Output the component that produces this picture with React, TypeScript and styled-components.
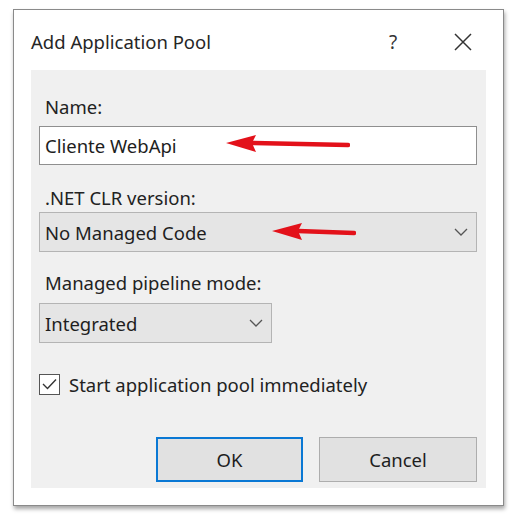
import React from "react";
import styled, {createGlobalStyle} from "styled-components";

const GlobalStyle = createGlobalStyle`
    html, body {
        margin: 0;
        padding: 0;
        background: #ffffff;
    }
    body {
        font-family: "Noto Sans", "Open Sans", sans-serif;
        color: #222;
    }
`;

const Page = styled.div`
    padding: 9px 0 0 13px;
    width: 517px;
    height: 523px;
    box-sizing: border-box;
`;

const Dialog = styled.div`
    width: 491px;
    height: 497px;
    box-sizing: border-box;
    border: 1px solid #8a8a8a;
    background: #ffffff;
    box-shadow: 1px 3px 4px rgba(0, 0, 0, 0.35);
    display: flex;
    flex-direction: column;
`;

const TitleBar = styled.div`
    height: 60px;
    box-sizing: border-box;
    padding: 20px 0 0 17px;
    display: flex;
    align-items: flex-start;
`;

const Title = styled.div`
    flex: 1;
    font-size: 18.5px;
    line-height: 24px;
    color: #262626;
`;

const HelpGlyph = styled.div`
    width: 20px;
    font-size: 19px;
    line-height: 24px;
    color: #333;
    text-align: center;
    margin-right: 51px;
`;

const CloseButton = styled.div`
    width: 18px;
    height: 18px;
    margin: 3px 31px 0 0;
    display: flex;
`;

const Panel = styled.div`
    margin: 0 17px;
    height: 418px;
    box-sizing: border-box;
    background: #f0f0f0;
    padding: 25px 9px 6px 8px;
    display: flex;
    flex-direction: column;
    position: relative;
`;

const FieldGroup = styled.div<{ $mt?: number }>`
    display: flex;
    flex-direction: column;
    margin-top: ${p => p.$mt ?? 0}px;
`;

const Label = styled.div<{ $mb: number }>`
    font-size: 18.5px;
    line-height: 24px;
    padding-left: 6px;
    margin-bottom: ${p => p.$mb}px;
    color: #222;
`;

const TextBox = styled.div`
    height: 39px;
    box-sizing: border-box;
    border: 1px solid #8f8f8f;
    background: #ffffff;
    padding-left: 5px;
    font-size: 18.5px;
    line-height: 37px;
    color: #1e1e1e;
`;

const Select = styled.div<{ $width?: number }>`
    height: 40px;
    width: ${p => (p.$width ? `${p.$width}px` : "auto")};
    box-sizing: border-box;
    border: 1px solid #b4b4b4;
    background: #e5e5e5;
    padding: 0 8px 0 5px;
    display: flex;
    align-items: center;
    justify-content: space-between;
    font-size: 18.5px;
    color: #1e1e1e;
`;

const CheckRow = styled.label`
    margin-top: 30px;
    height: 22px;
    display: flex;
    align-items: center;
    gap: 9px;
    font-size: 18.5px;
    color: #222;
`;

const CheckBox = styled.div`
    width: 21px;
    height: 21px;
    box-sizing: border-box;
    border: 1px solid #555;
    background: #fff;
    display: flex;
    align-items: center;
    justify-content: center;
`;

const ButtonRow = styled.div`
    margin-top: 42px;
    display: flex;
    justify-content: flex-end;
    gap: 16px;
`;

const Button = styled.button<{ $primary?: boolean; $width: number }>`
    width: ${p => p.$width}px;
    height: 45px;
    box-sizing: border-box;
    border: ${p => (p.$primary ? "2px solid #0a78d4" : "1px solid #adadad")};
    background: #e1e1e1;
    font-family: inherit;
    font-size: 18.5px;
    color: #1e1e1e;
    padding: 0;
    cursor: pointer;
`;

const Annotation = styled.svg`
    position: absolute;
    pointer-events: none;
`;

const Chevron = () => (
    <svg width="14" height="8" viewBox="0 0 14 8">
        <path d="M1 1 L7 7 L13 1" fill="none" stroke="#555" strokeWidth="1.3"/>
    </svg>
);

const RedArrow: React.FC<{ left: number; top: number; width: number }> = ({left, top, width}) => (
    <Annotation style={{left, top}} width={width} height="20" viewBox={`0 0 ${width} 20`}>
        <path d={`M26 9 L${width - 2} 11`} stroke="#e3111a" strokeWidth="4.5" strokeLinecap="round"/>
        <path d="M0 9 L30 1 L26 9 L30 18 Z" fill="#e3111a"/>
    </Annotation>
);

const App: React.FC = () => {
    return (
        <>
            <GlobalStyle/>
            <Page>
                <Dialog>
                    <TitleBar>
                        <Title>Add Application Pool</Title>
                        <HelpGlyph>?</HelpGlyph>
                        <CloseButton>
                            <svg width="18" height="18" viewBox="0 0 18 18">
                                <path d="M1 1 L17 17 M17 1 L1 17" stroke="#333" strokeWidth="1.5"/>
                            </svg>
                        </CloseButton>
                    </TitleBar>
                    <Panel>
                        <FieldGroup>
                            <Label $mb={7}>Name:</Label>
                            <TextBox>Cliente WebApi</TextBox>
                        </FieldGroup>
                        <FieldGroup $mt={21}>
                            <Label $mb={2}>.NET CLR version:</Label>
                            <Select>
                                No Managed Code
                                <Chevron/>
                            </Select>
                        </FieldGroup>
                        <FieldGroup $mt={19}>
                            <Label $mb={8}>Managed pipeline mode:</Label>
                            <Select $width={233}>
                                Integrated
                                <Chevron/>
                            </Select>
                        </FieldGroup>
                        <CheckRow>
                            <CheckBox>
                                <svg width="15" height="12" viewBox="0 0 15 12">
                                    <path d="M1 6 L5.5 10.5 L14 1.5" fill="none" stroke="#333" strokeWidth="1.4"/>
                                </svg>
                            </CheckBox>
                            Start application pool immediately
                        </CheckRow>
                        <ButtonRow>
                            <Button $primary $width={147}>OK</Button>
                            <Button $width={158}>Cancel</Button>
                        </ButtonRow>
                        <RedArrow left={195} top={64} width={124}/>
                        <RedArrow left={241} top={152} width={84}/>
                    </Panel>
                </Dialog>
            </Page>
        </>
    );
};

export default App;
